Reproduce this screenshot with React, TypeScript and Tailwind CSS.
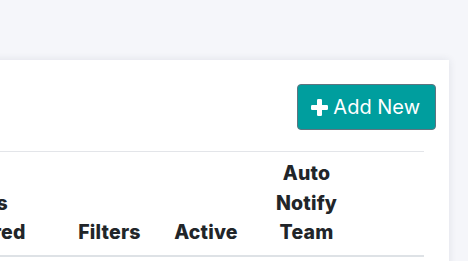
// Alert rules card, header strip of the table (scrolled so the left columns are cut off)

const columns = [
  { key: 'triggered', label: 'Alerts Triggered', width: 'w-[163px]', pad: 'pl-3 pr-[20px]' },
  { key: 'filters', label: 'Filters', width: 'w-[93px]', pad: 'px-3' },
  { key: 'active', label: 'Active', width: 'w-[100px]', pad: 'px-3' },
  { key: 'notify', label: 'Auto Notify Team', width: 'w-[101px]', pad: 'px-3' },
  { key: 'actions', label: '', width: 'w-[67px]', pad: 'px-3' },
];

function PlusIcon() {
  return (
    <svg width="17" height="17" viewBox="0 0 17 17" className="shrink-0" fill="currentColor">
      <rect x="6" y="0" width="5" height="17" rx="1.2" />
      <rect x="0" y="6" width="17" height="5" rx="1.2" />
    </svg>
  );
}

export default function App() {
  return (
    <div
      className="min-h-screen bg-[#f5f6fa] pt-[60px] overflow-hidden"
      style={{ fontFamily: 'Inter, "Noto Sans", sans-serif' }}
    >
      <div className="ml-[-124px] w-[573px] bg-white shadow-[0_0_8px_rgba(30,40,70,0.10)] pl-6 pr-6 pt-6 pb-10">
        <div className="flex justify-end -mr-[11px]">
          <button className="flex items-center gap-[5px] h-[46px] pl-[13px] pr-[15px] bg-[#009e9e] border border-[#5f7480] rounded-[4px] text-white text-[20px] leading-none">
            <PlusIcon />
            <span>Add New</span>
          </button>
        </div>

        <table className="mt-[21px] w-[524px] table-fixed border-collapse">
          <thead>
            <tr className="border-t border-[#e3e5e9] border-b-2 border-b-[#dee2e6]">
              {columns.map((col) => (
                <th
                  key={col.key}
                  className={`${col.width} ${col.pad} align-bottom text-center text-[19.5px] leading-[29.5px] font-extrabold tracking-[0.2px] text-[#212529] pt-[7px] pb-[7px]`}
                >
                  {col.label}
                </th>
              ))}
            </tr>
          </thead>
        </table>
      </div>
    </div>
  );
}
